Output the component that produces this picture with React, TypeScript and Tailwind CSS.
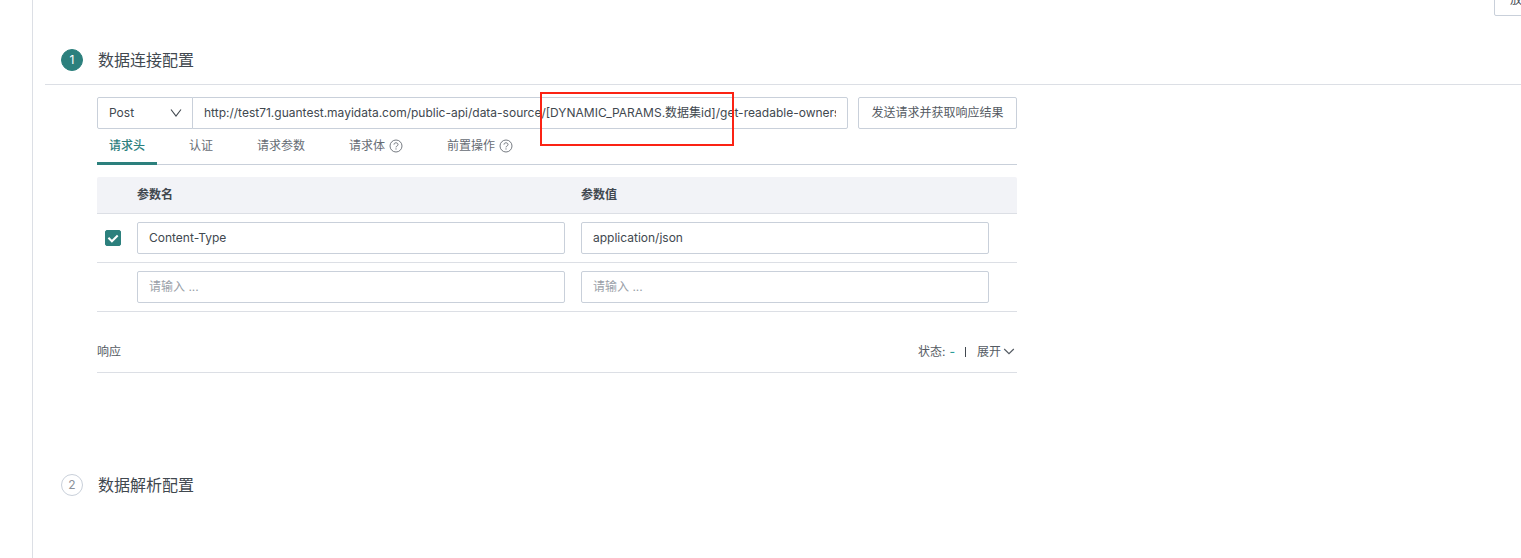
import { useState } from "react";

const TABS = [
  { key: "headers", label: "请求头", help: false },
  { key: "auth", label: "认证", help: false },
  { key: "params", label: "请求参数", help: false },
  { key: "body", label: "请求体", help: true },
  { key: "pre", label: "前置操作", help: true },
];

const ROWS = [
  { name: "Content-Type", value: "application/json", checkable: true },
  { name: "", value: "", checkable: false },
];

const URL =
  "http://test71.guantest.mayidata.com/public-api/data-source/[DYNAMIC_PARAMS.数据集id]/get-readable-owners";

const fieldClass =
  "block h-8 w-full rounded-[2px] border border-[#c9d0da] bg-white px-[11px] pb-0.5 text-[#41484f] outline-none placeholder:text-[#9a9fa8]";

function HelpIcon() {
  return (
    <svg className="h-[14px] w-[14px]" viewBox="0 0 14 14" fill="none" stroke="currentColor" aria-hidden="true">
      <circle cx="7" cy="7" r="6" strokeWidth="0.9" />
      <path d="M5 5.6C5 4.4 5.8 3.8 7 3.8s2 .7 2 1.7c0 .9-.6 1.3-1.1 1.6-.6.3-.9.6-.9 1.3" strokeWidth="0.9" />
      <path d="M7 9.4v1.1" strokeWidth="1" />
    </svg>
  );
}

function Chevron() {
  return (
    <svg className="h-3 w-3" viewBox="0 0 12 12" fill="none" stroke="currentColor" aria-hidden="true">
      <path d="M1 2.5l5 6.5 5-6.5" strokeWidth="1.1" />
    </svg>
  );
}

function ExpandArrow() {
  return (
    <svg className="h-3 w-3" viewBox="0 0 12 12" fill="none" stroke="currentColor" aria-hidden="true">
      <path d="M1.2 3l4.8 4.6L10.8 3" strokeWidth="1.2" />
    </svg>
  );
}

function StepTitle({ step, title, active }: { step: number; title: string; active: boolean }) {
  return (
    <div className="flex h-6 items-center gap-[15px] pl-4">
      <span
        className={`flex h-[22px] w-[22px] items-center justify-center rounded-full border ${
          active ? "border-[#2c807d] bg-[#2c807d] text-white" : "border-[#c9d0da] text-[#8b919a]"
        }`}
      >
        {step}
      </span>
      <h2 className="text-base text-[#41484f]">{title}</h2>
    </div>
  );
}

export default function App() {
  const [tab, setTab] = useState("headers");
  const [open, setOpen] = useState(false);

  return (
    <div className="min-h-screen overflow-hidden bg-white pl-8 font-['Inter','Noto_Sans_CJK_SC',sans-serif] text-xs text-[#41484f]">
      <main className="min-h-screen border-l border-[#dcdfe5] pl-3">
        <header className="-mr-[29px] flex h-4 items-end justify-end">
          <button type="button" className="h-8 shrink-0 rounded-[2px] border border-[#c9d0da] px-[15px]">
            放弃
          </button>
        </header>

        <section>
          <div className="border-b border-[#dcdfe5] pt-8 pb-3">
            <StepTitle step={1} title="数据连接配置" active />
          </div>

          <div className="relative ml-[52px] max-w-[920px] pt-3">
            <div className="flex">
              <div className="relative w-24 shrink-0">
                <select
                  aria-label="请求方式"
                  defaultValue="Post"
                  className="h-8 w-full appearance-none rounded-l-[2px] border border-[#c9d0da] bg-white px-[11px] outline-none"
                >
                  <option>Post</option>
                  <option>Get</option>
                </select>
                <span className="pointer-events-none absolute top-[10px] right-[11px]">
                  <Chevron />
                </span>
              </div>
              <input
                type="text"
                aria-label="请求地址"
                defaultValue={URL}
                className="-ml-px h-8 min-w-0 flex-1 rounded-r-[2px] border border-[#c9d0da] px-[11px] pb-1 outline-none"
              />
              <button
                type="button"
                className="ml-[10px] h-8 w-[159px] shrink-0 rounded-[2px] border border-[#c9d0da] text-[#555b63]"
              >
                发送请求并获取响应结果
              </button>
            </div>

            {/* Highlight over the dynamic part of the url */}
            <div className="pointer-events-none absolute top-[7px] left-[443px] h-[54px] w-[194px] border-2 border-[#fb2314]" />

            <div role="tablist" className="flex h-9 gap-5 border-b border-[#c9d0da]">
              {TABS.map((t) => (
                <button
                  key={t.key}
                  type="button"
                  role="tab"
                  aria-selected={tab === t.key}
                  onClick={() => setTab(t.key)}
                  className={`-mb-px flex items-center gap-1 border-b-3 px-3 pt-px ${
                    tab === t.key
                      ? "border-[#2c807d] font-medium text-[#2c807d]"
                      : "border-transparent text-[#666c74]"
                  }`}
                >
                  {t.label}
                  {t.help && <HelpIcon />}
                </button>
              ))}
            </div>

            <table className="mt-3 w-full table-fixed border-separate border-spacing-0">
              <colgroup>
                <col className="w-8" />
                <col />
                <col className="w-[424px]" />
                <col className="w-5" />
              </colgroup>
              <thead>
                <tr className="h-[37px] bg-[#f2f3f7] text-left">
                  <td className="rounded-tl-[2px] border-b border-[#dcdfe5]" />
                  <th className="border-b border-[#dcdfe5] px-2 font-semibold">参数名</th>
                  <th className="border-b border-[#dcdfe5] px-2 font-semibold">参数值</th>
                  <td className="rounded-tr-[2px] border-b border-[#dcdfe5]" />
                </tr>
              </thead>
              <tbody>
                {ROWS.map((row, i) => (
                  <tr key={i}>
                    <td className="border-b border-[#dcdfe5] pl-2">
                      {row.checkable && (
                        <label className="relative block h-4 w-4">
                          <input
                            type="checkbox"
                            defaultChecked
                            aria-label={`启用 ${row.name}`}
                            className="peer block h-4 w-4 appearance-none rounded-[2px] border border-[#c9d0da] checked:border-[#2c807d] checked:bg-[#2c807d]"
                          />
                          <svg
                            className="pointer-events-none absolute inset-0 hidden h-4 w-4 text-white peer-checked:block"
                            viewBox="0 0 16 16"
                            fill="none"
                            stroke="currentColor"
                            aria-hidden="true"
                          >
                            <path d="M3.4 7.8l3.5 3.5 5.8-5.8" strokeWidth="2" />
                          </svg>
                        </label>
                      )}
                    </td>
                    <td className="border-b border-[#dcdfe5] p-2">
                      <input type="text" aria-label="参数名" placeholder="请输入 ..." defaultValue={row.name} className={fieldClass} />
                    </td>
                    <td className="border-b border-[#dcdfe5] p-2">
                      <input type="text" aria-label="参数值" placeholder="请输入 ..." defaultValue={row.value} className={fieldClass} />
                    </td>
                    <td className="border-b border-[#dcdfe5]" />
                  </tr>
                ))}
              </tbody>
            </table>

            <div className="mt-5 flex h-[41px] items-center justify-between border-b border-[#dcdfe5] text-[#555b63]">
              <span>响应</span>
              <div className="flex items-center">
                <span>状态:</span>
                <span className="ml-1 font-medium text-[#2c9c97]">-</span>
                <span className="mr-[11px] ml-[10px] h-[10px] w-px bg-[#41484f]" />
                <button type="button" aria-expanded={open} onClick={() => setOpen(!open)} className="flex items-center gap-0.5 pr-0.5">
                  展开
                  <ExpandArrow />
                </button>
              </div>
            </div>
          </div>
        </section>

        <section className="pt-[100px]">
          <StepTitle step={2} title="数据解析配置" active={false} />
        </section>
      </main>
    </div>
  );
}
